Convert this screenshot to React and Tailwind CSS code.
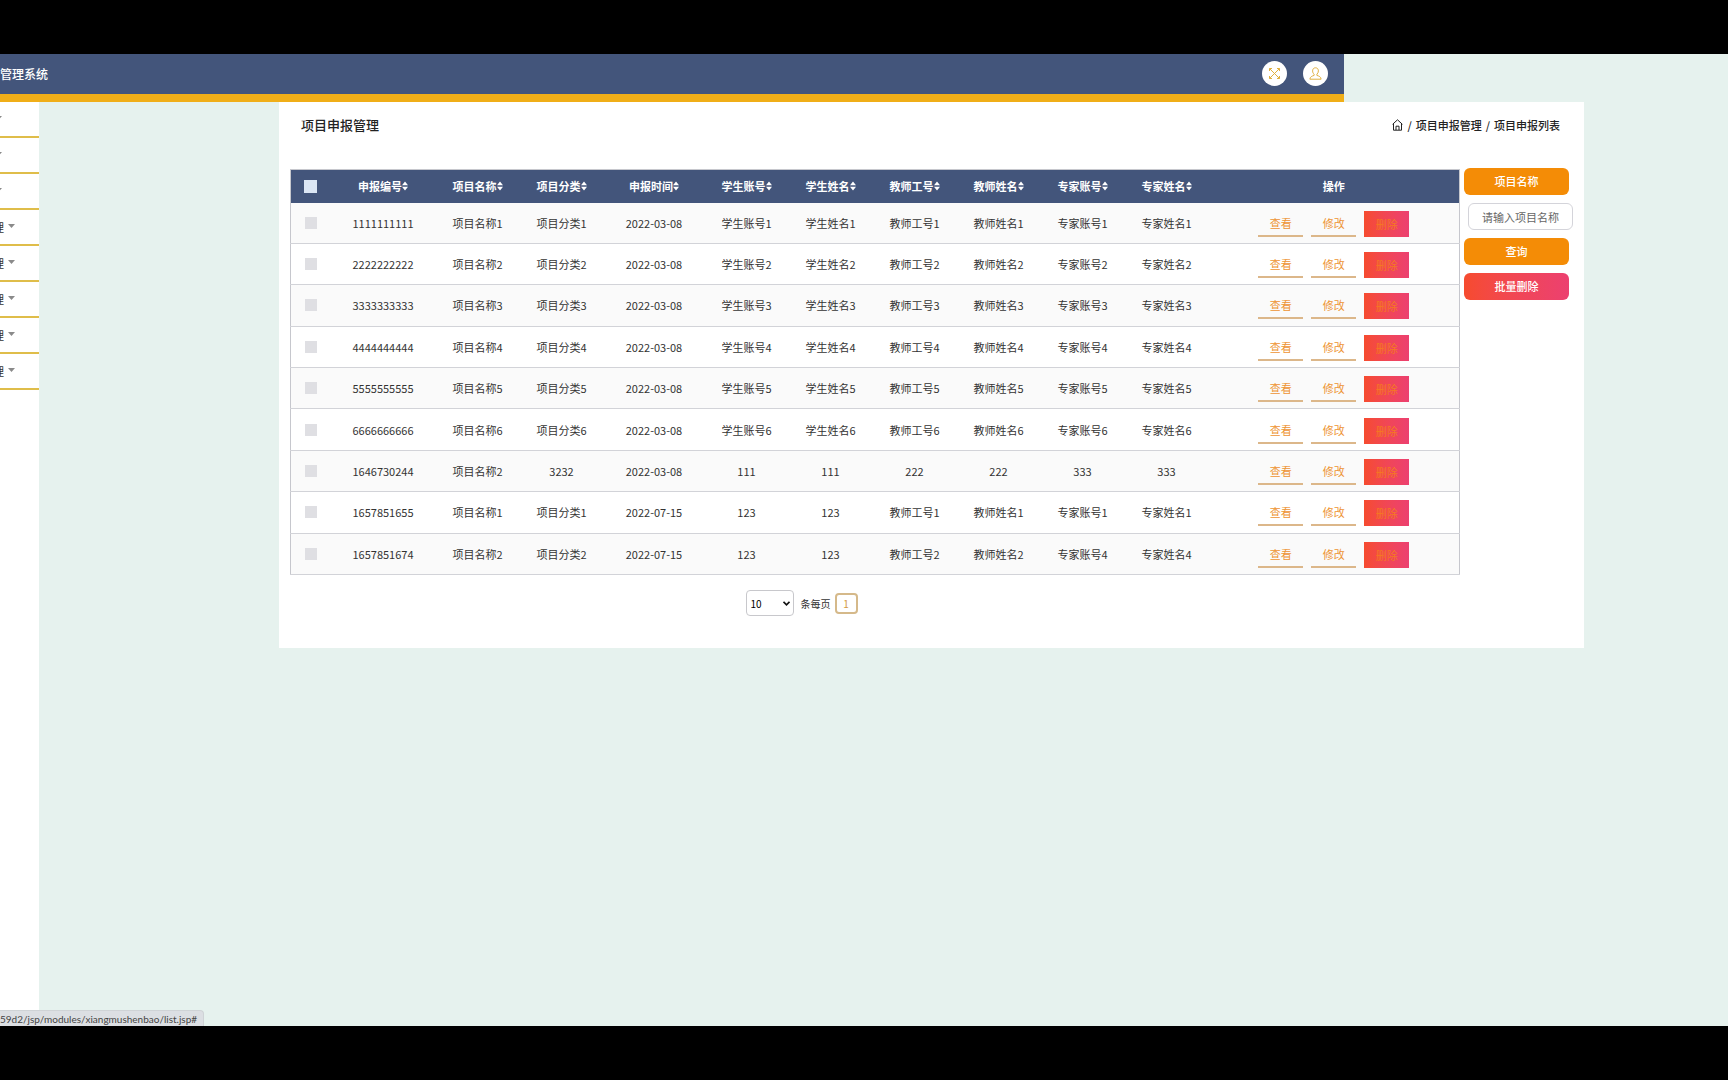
const columns = [
  "申报编号",
  "项目名称",
  "项目分类",
  "申报时间",
  "学生账号",
  "学生姓名",
  "教师工号",
  "教师姓名",
  "专家账号",
  "专家姓名",
];

const numbered = (code, n) => [
  code,
  `项目名称${n}`,
  `项目分类${n}`,
  "2022-03-08",
  `学生账号${n}`,
  `学生姓名${n}`,
  `教师工号${n}`,
  `教师姓名${n}`,
  `专家账号${n}`,
  `专家姓名${n}`,
];

const rows = [
  numbered("1111111111", 1),
  numbered("2222222222", 2),
  numbered("3333333333", 3),
  numbered("4444444444", 4),
  numbered("5555555555", 5),
  numbered("6666666666", 6),
  ["1646730244", "项目名称2", "3232", "2022-03-08", "111", "111", "222", "222", "333", "333"],
  ["1657851655", "项目名称1", "项目分类1", "2022-07-15", "123", "123", "教师工号1", "教师姓名1", "专家账号1", "专家姓名1"],
  ["1657851674", "项目名称2", "项目分类2", "2022-07-15", "123", "123", "教师工号2", "教师姓名2", "专家账号4", "专家姓名4"],
];

const menu = ["", "", "", "理", "理", "理", "理", "理"];

function SortIcon() {
  return (
    <svg width="6" height="10" viewBox="0 0 6 10" fill="currentColor" className="shrink-0">
      <path d="M3 0.5 L6 4.2 H0 Z M3 9.5 L0 5.8 H6 Z" />
    </svg>
  );
}

function ExpandIcon() {
  return (
    <svg width="13" height="13" viewBox="0 0 13 13" fill="none" stroke="currentColor" strokeWidth="1">
      <path d="M1.5 4V1.5H4M9 1.5h2.5V4M11.5 9v2.5H9M4 11.5H1.5V9M1.5 1.5l10 10M11.5 1.5l-10 10" />
    </svg>
  );
}

function UserIcon() {
  return (
    <svg width="13" height="13" viewBox="0 0 13 13" fill="none" stroke="currentColor" strokeWidth="1">
      <path d="M6.5 0.8C4.6 0.8 3.6 2.2 3.6 3.9c0 1.4.6 2.6 1.5 3.3v1.2C3 9.1 1 9.8.9 12.2h11.2C12 9.8 10 9.1 7.9 8.4v-1.2c.9-.7 1.5-1.9 1.5-3.3C9.4 2.2 8.4.8 6.5.8Z" />
    </svg>
  );
}

function HomeIcon() {
  return (
    <svg width="11" height="12" viewBox="0 0 11 12" fill="none" stroke="currentColor" strokeWidth="1">
      <path d="M0.6 5.3 5.5 0.8l4.9 4.5M1.5 4.7v6.5h8V4.7M4 11V7.2h3V11" />
    </svg>
  );
}

function Header() {
  return (
    <header className="mr-96 flex h-12 items-center justify-between border-b-8 border-[#f0ae18] bg-[#43557b] pr-4">
      <h1 className="text-xs font-medium text-white">管理系统</h1>
      <div className="mb-0.5 flex gap-4 text-[#e0b040]">
        <button aria-label="全屏" className="flex size-[25px] items-center justify-center rounded-full bg-white">
          <ExpandIcon />
        </button>
        <button aria-label="用户" className="flex size-[25px] items-center justify-center rounded-full bg-white">
          <UserIcon />
        </button>
      </div>
    </header>
  );
}

function Sidebar() {
  return (
    <nav className="w-[39px] shrink-0 overflow-hidden bg-white">
      {menu.map((label, i) => (
        <a
          key={i}
          href="#"
          className={`flex h-9 items-center justify-end gap-1 border-b-2 border-[#dfbd4a] text-[11px] text-[#333] ${
            label ? "pr-6" : "pr-[37px]"
          }`}
        >
          {label && <span className="-ml-3">{label}</span>}
          <svg width="7" height="4" viewBox="0 0 7 4" fill="#8a8a8a" className="mb-0.5 shrink-0">
            <path d="M0 0h7L3.5 4Z" />
          </svg>
        </a>
      ))}
    </nav>
  );
}

function Checkbox({ label, head }) {
  return (
    <input
      type="checkbox"
      aria-label={label}
      className={`block mx-auto appearance-none ${head ? "size-[13px] bg-[#dbe6f4]" : "size-3 bg-[#dfdfe3]"}`}
    />
  );
}

function ProjectTable() {
  return (
    <table className="h-[406px] w-full table-fixed border border-[#c6c7cd] text-center text-[11px] leading-4 text-[#333]">
      <thead>
        <tr className="h-[33px] bg-[#43557b] text-white">
          <th className="w-10">
            <Checkbox label="全选" head />
          </th>
          {columns.map((name) => (
            <th
              key={name}
              className={name === "申报编号" ? "w-[105px]" : name === "申报时间" ? "w-[101px]" : "w-[84px]"}
            >
              <span className="flex items-center justify-center">
                {name}
                <SortIcon />
              </span>
            </th>
          ))}
          <th>操作</th>
        </tr>
      </thead>
      <tbody>
        {rows.map((row) => (
          <tr key={row[0]} className="border-b border-[#d2d3d8] odd:bg-[#fafafa]">
            <td>
              <Checkbox label={row[0]} />
            </td>
            {row.map((value, i) => (
              <td key={i}>{value}</td>
            ))}
            <td className="pt-0.5">
              <div className="flex justify-center gap-2 text-[#ee9433]">
                <button className="h-[26px] w-[45px] border-b-2 border-[#dcb78a]">查看</button>
                <button className="h-[26px] w-[45px] border-b-2 border-[#dcb78a]">修改</button>
                <button className="h-[26px] w-[45px] bg-linear-to-r from-[#f64b2e] to-[#ec4070] text-[#f57a1e]">
                  删除
                </button>
              </div>
            </td>
          </tr>
        ))}
      </tbody>
    </table>
  );
}

function Pagination() {
  return (
    <div className="mt-[15px] flex items-center justify-center pr-[147px] text-[10px] text-[#333]">
      <label className="flex items-center gap-[7px]">
        <span className="relative flex">
          <select
            defaultValue="10"
            className="h-[26px] w-12 appearance-none rounded border border-[#c8c8cc] bg-white pl-1 text-[10px] text-black"
          >
            <option>10</option>
            <option>25</option>
            <option>50</option>
          </select>
          <svg
            width="7"
            height="5"
            viewBox="0 0 7 5"
            fill="none"
            stroke="#111"
            strokeWidth="1.7"
            className="pointer-events-none absolute top-[11px] right-1"
          >
            <path d="M0.5 0.8 3.5 3.8 6.5 0.8" />
          </svg>
        </span>
        条每页
      </label>
      <button className="ml-1 h-[21px] w-[23px] rounded border-2 border-[#d5b98a] text-[#d39a45]">1</button>
    </div>
  );
}

function SearchForm() {
  return (
    <form className="-mt-px ml-1 flex w-[109px] shrink-0 flex-col gap-2 text-[11px]">
      <label
        htmlFor="name"
        className="h-[27px] w-[105px] rounded-md bg-[#f48c06] text-center leading-[27px] font-medium text-white"
      >
        项目名称
      </label>
      <input
        id="name"
        type="text"
        placeholder="请输入项目名称"
        className="ml-1 h-[27px] w-[105px] rounded-md border border-[#d4d4da] text-center placeholder:text-[#666]"
      />
      <button type="button" className="h-[27px] w-[105px] rounded-md bg-[#f48c06] font-medium text-white">
        查询
      </button>
      <button
        type="button"
        className="h-[27px] w-[105px] rounded-md bg-linear-to-r from-[#f64b2e] to-[#ec4070] font-medium text-white"
      >
        批量删除
      </button>
    </form>
  );
}

export default function App() {
  return (
    <div className="flex min-h-screen flex-col bg-black py-[54px] font-['Noto_Sans_CJK_SC',sans-serif]">
      <div className="relative flex flex-1 flex-col bg-[#e6f2ee]">
        <Header />
        <div className="flex flex-1">
          <Sidebar />
          <main className="mr-36 ml-60 h-fit min-w-0 flex-1 bg-white pb-8 pl-[11px]">
            <div className="flex h-[67px] items-start justify-between pt-[13px] pr-6 pl-[11px] text-[#222]">
              <h2 className="text-[13px] leading-5 font-medium">项目申报管理</h2>
              <nav className="flex items-center gap-1 text-[11px] leading-5 font-medium">
                <a href="#" aria-label="首页">
                  <HomeIcon />
                </a>
                <span>/</span>
                <a href="#">项目申报管理</a>
                <span>/</span>
                <a href="#">项目申报列表</a>
              </nav>
            </div>
            <div className="flex pr-[11px]">
              <div className="min-w-0 flex-1">
                <ProjectTable />
                <Pagination />
              </div>
              <SearchForm />
            </div>
          </main>
        </div>
        <div className="absolute bottom-0 left-0 h-4 rounded-tr-sm border-t border-r border-[#cfd3d6] bg-[#dcdfe3] pr-1.5 font-[Lato,sans-serif] text-[10px] leading-4 text-[#444]">
          59d2/jsp/modules/xiangmushenbao/list.jsp#
        </div>
      </div>
    </div>
  );
}
